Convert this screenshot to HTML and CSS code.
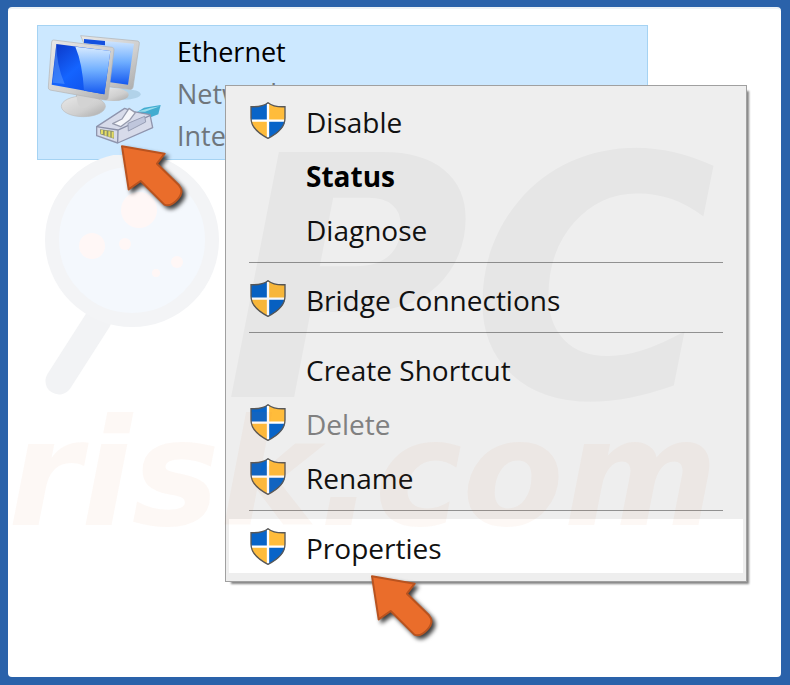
FILE: index.html
```html
<!doctype html>
<html lang="en">
<head>
<meta charset="utf-8">
<title>Network Connections</title>
<link rel="stylesheet" href="styles.css">
</head>

<body>
<svg class="defs" aria-hidden="true">
	<symbol id="shield" viewBox="0 0 108 111">
		<path d="M54 2C44 10 24 15 3 14V48C3 74 26 95 54 109Z" fill="#0864c8"/>
		<path d="M54 2C64 10 84 15 105 14V48C105 74 82 95 54 109Z" fill="#ffbc3b"/>
		<path d="M3 56H54V109C26 95 5 78 3 56Z" fill="#ffbc3b"/>
		<path d="M105 56H54V109C82 95 103 78 105 56Z" fill="#0864c8"/>
		<path d="M54 4V107M4 56H104" stroke="#fff" stroke-width="7"/>
		<path d="M54 2C44 10 24 15 3 14V48C3 74 26 95 54 109C82 95 105 74 105 48V14C84 15 64 10 54 2Z" fill="none" stroke="#585858" stroke-width="4"/>
	</symbol>
	<symbol id="arrow" viewBox="0 0 270 240">
		<path d="M36 34L164 56L141 86L207 151Q224 171 202 194Q181 217 163 209L92 138L56 163Z" fill="#ea6d2b" stroke="#b9531f" stroke-width="6" stroke-linejoin="round"/>
	</symbol>
</svg>

<div class="frame">
	<main class="desk">
		<section class="tile">
			<svg class="net" viewBox="0 0 390 390" aria-hidden="true">
				<defs>
					<linearGradient id="screen" x1="0" y1="0" x2="1" y2="1">
						<stop offset="0" stop-color="#0b35c4"/>
						<stop offset=".45" stop-color="#1464ff"/>
						<stop offset="1" stop-color="#0e45dd"/>
					</linearGradient>
					<linearGradient id="glare" x1="0" y1="0" x2="0" y2="1">
						<stop offset="0" stop-color="#d7eaff"/>
						<stop offset=".5" stop-color="#6faeff"/>
						<stop offset="1" stop-color="#1559f0"/>
					</linearGradient>
					<linearGradient id="metal" x1="0" y1="0" x2="1" y2="1">
						<stop offset="0" stop-color="#e8e8e8"/>
						<stop offset=".6" stop-color="#cfcfcf"/>
						<stop offset="1" stop-color="#a9a9a9"/>
					</linearGradient>
				</defs>
				<ellipse cx="252" cy="205" rx="50" ry="16" fill="#9fc3da" opacity=".6"/>
				<ellipse cx="220" cy="206" rx="46" ry="19" fill="url(#metal)"/>
				<path d="M122 29L294 45Q299 47 298 53L279 184Q277 191 270 190L185 180Z" fill="url(#metal)" stroke="#b0b0b0" stroke-width="2"/>
				<path d="M132 39L282 53L264 176L200 167Z" fill="url(#glare)"/>
				<path d="M132 39L195 45V58L132 52Z" fill="#1450df"/>
				<path d="M112 194H180V235Q140 248 105 226Z" fill="#b5b5b5"/>
				<ellipse cx="130" cy="241" rx="66" ry="31" fill="url(#metal)" stroke="#bdbdbd" stroke-width="2"/>
				<path d="M112 196L166 204Q155 245 126 247Q106 238 112 196Z" fill="#d3d3d3"/>
				<path d="M41 42L217 64Q223 66 222 72L204 217Q202 223 195 222L30 192Q24 190 25 183L35 48Q36 41 41 42Z" fill="url(#metal)" stroke="#b4b4b4" stroke-width="2"/>
				<path d="M49 54L211 75L193 205L35 176Z" fill="url(#screen)"/>
				<path d="M106 62L211 75L193 205L132 194Q127 111 106 62Z" fill="url(#glare)"/>
				<path d="M49 54Q49 115 74 174L38 170Z" fill="#67a5ff" opacity=".45"/>
				<path d="M288 260L312 245L362 237L355 265L326 276Z" fill="#42acd0"/>
				<path d="M290 257L330 246L360 241L315 257Z" fill="#9addec"/>
				<path d="M170 302L254 247L281 257L330 266L338 305L233 351L170 329Z" fill="#d7dbea" stroke="#8f95ae" stroke-width="4" stroke-linejoin="round"/>
				<path d="M170 302L234 312L331 268M234 312L233 350" fill="none" stroke="#8a90a9" stroke-width="4"/>
				<path d="M218 293L246 279L267 247L286 260L270 281L242 302Z" fill="#f5f6fa" stroke="#979cae" stroke-width="4" stroke-linejoin="round"/>
				<path d="M264 292L314 271L317 288L265 315Z" fill="#bfc6dc" stroke="#979eb5" stroke-width="3"/>
				<path d="M180 310L221 315L222 338L181 325Z" fill="#8c916b"/>
				<path d="M186 312V324M197 314V329M208 316V332M218 317V335" stroke="#e4dc63" stroke-width="6"/>
			</svg>
			<div class="info">
				<h1>Ethernet</h1>
				<p>Network</p>
				<p>Intel</p>
			</div>
		</section>

		<ul class="menu">
			<li><button type="button"><svg class="ico"><use href="#shield"/></svg><span>Disable</span></button></li>
			<li><button type="button" class="default"><i class="ico"></i><span>Status</span></button></li>
			<li><button type="button"><i class="ico"></i><span>Diagnose</span></button></li>
			<li class="line"></li>
			<li><button type="button"><svg class="ico"><use href="#shield"/></svg><span>Bridge Connections</span></button></li>
			<li class="line"></li>
			<li><button type="button"><i class="ico"></i><span>Create Shortcut</span></button></li>
			<li><button type="button" disabled><svg class="ico"><use href="#shield"/></svg><span>Delete</span></button></li>
			<li><button type="button"><svg class="ico"><use href="#shield"/></svg><span>Rename</span></button></li>
			<li class="line"></li>
			<li><button type="button" class="cur"><svg class="ico"><use href="#shield"/></svg><span>Properties</span></button></li>
		</ul>

		<div class="mark">
			<svg class="lens" viewBox="0 0 180 245" aria-hidden="true">
				<path d="M58 165L19 226" stroke="#f2f3f5" stroke-width="27" stroke-linecap="round"/>
				<circle cx="92" cy="85" r="80" fill="#f4f8fd" stroke="#f3f4f6" stroke-width="14"/>
				<g fill="#fff7f6">
					<circle cx="99" cy="55" r="18"/>
					<circle cx="52" cy="91" r="13"/>
					<circle cx="85" cy="89" r="6"/>
					<circle cx="137" cy="107" r="6"/>
					<circle cx="116" cy="118" r="4"/>
				</g>
			</svg>
			<span class="pc">PC</span>
			<span class="risk">risk.com</span>
		</div>

		<svg class="arrow a1" aria-hidden="true"><use href="#arrow"/></svg>
		<svg class="arrow a2" aria-hidden="true"><use href="#arrow"/></svg>
	</main>
</div>
</body>
</html>
```

FILE: styles.css
```css
*{ margin:0; padding:0; box-sizing:border-box; list-style:none; }
body{ background:#2a62aa; font-family:"Open Sans","Noto Sans",sans-serif; font-size:28px; color:#111; }
.defs{ position:absolute; width:0; height:0; }
.frame{ min-height:100vh; padding:7px 9px 8px 8px; display:flex; }
.desk{ position:relative; flex:1; padding:16px 29px; background:#fff; border-top:2px solid #edf2f6; border-radius:4px; overflow:hidden; }

/* connection */
.tile{ display:flex; gap:7px; max-width:611px; height:135px; padding-left:2px; background:#cce8ff; border:1px solid #a5d3f3; }
.net{ flex:none; width:130px; height:130px; }
.info{ padding-top:5px; font-size:27px; line-height:42px; }
.info h1{ font-size:27px; font-weight:normal; color:#000; }
.info p{ color:#6f767c; }

/* context menu */
.menu{ position:absolute; left:217px; top:76px; width:522px; padding:7px 3px 8px; background:#eee; border:1px solid #a0a0a0; box-shadow:4px 4px 2px -2px #858585; }
.menu button{ display:flex; align-items:center; gap:20px; width:100%; height:54px; padding-left:21px; border:0; background:none; font:inherit; color:inherit; text-align:left; }
.menu span{ padding-top:3px; line-height:36px; }
.menu .ico{ flex:none; width:36px; height:37px; }
.menu .default{ font-weight:bold; color:#000; }
.menu button:disabled{ color:#808080; }
.menu .cur{ background:#fff; }
.line{ height:1px; margin:7px 20px 8px; background:#919191; }

/* logo over the page */
.mark{ position:absolute; left:0; top:0; width:100%; height:100%; pointer-events:none; font-family:"DejaVu Sans",sans-serif; font-weight:bold; font-style:italic; }
.mark span{ position:absolute; line-height:1; white-space:nowrap; }
.lens{ position:absolute; left:32px; top:146px; width:180px; height:245px; }
.mark .pc{ left:216px; top:104px; font-size:336px; color:rgba(0,0,0,.03); }
.mark .risk{ left:0; top:391px; font-size:148px; color:rgba(225,110,50,.05); }

/* pointers */
.arrow{ position:absolute; width:90px; height:80px; overflow:visible; filter:drop-shadow(3px 3px 2px rgba(0,0,0,.75)); }
.a1{ left:102px; top:126px; }
.a2{ left:352px; top:556px; }
```
